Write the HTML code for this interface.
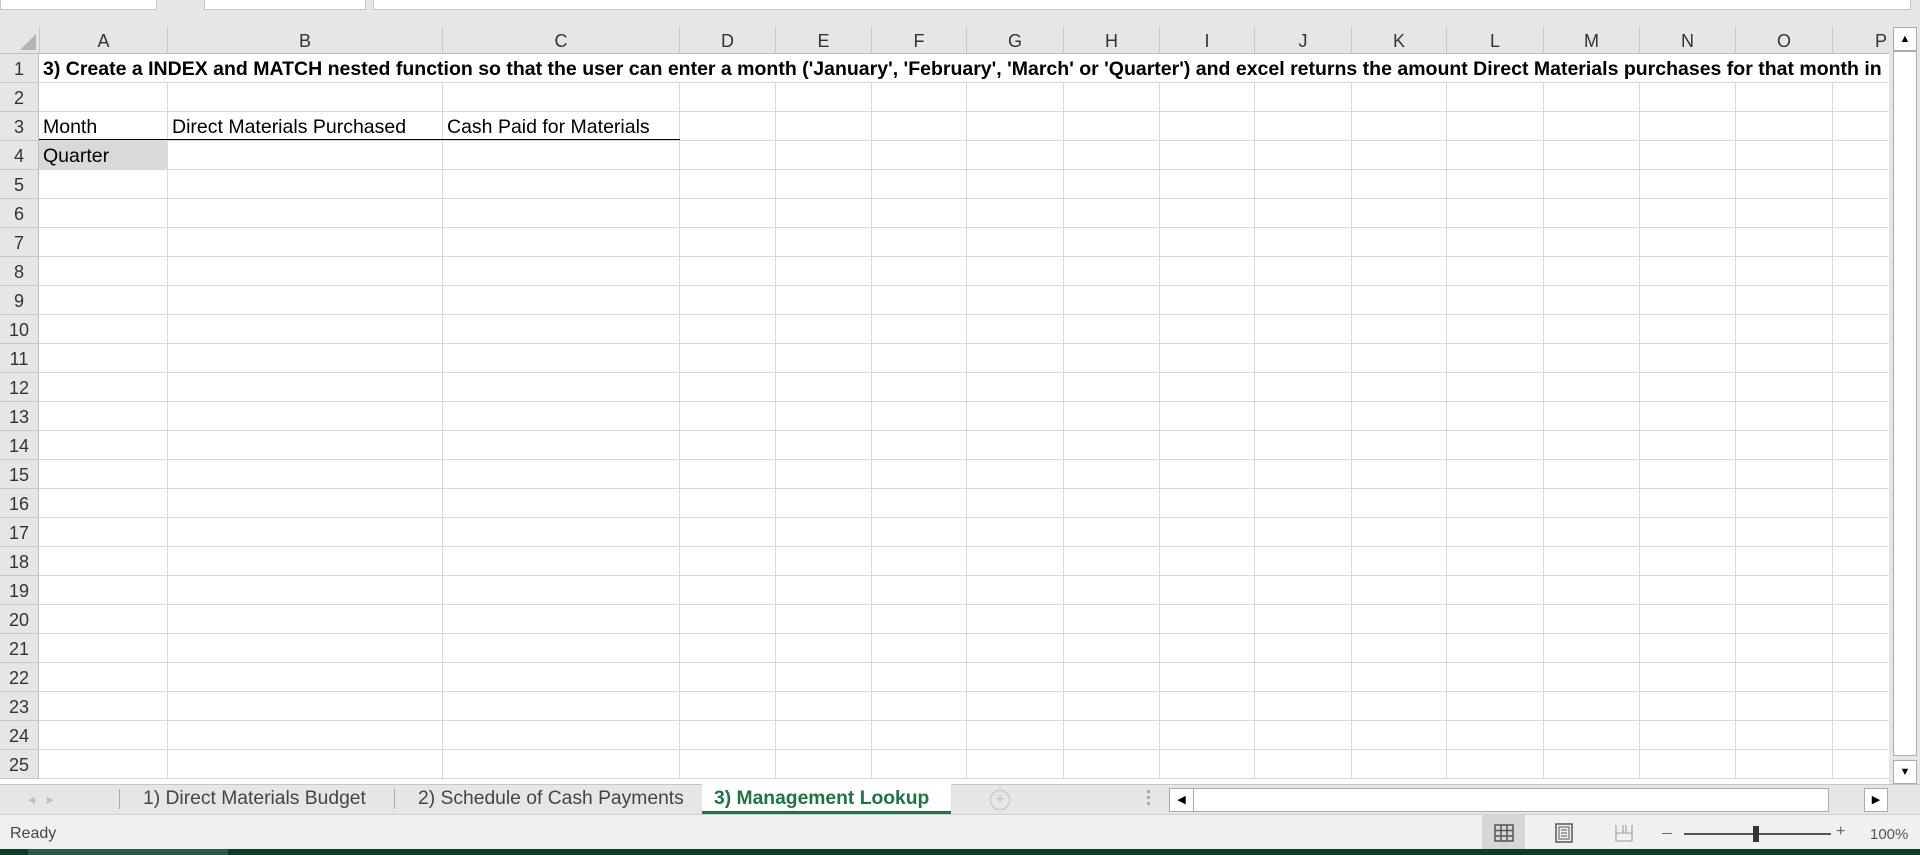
<!DOCTYPE html>
<html><head><meta charset="utf-8"><style>
*{margin:0;padding:0;box-sizing:border-box}
body{width:1920px;height:855px;overflow:hidden;background:#fff;font-family:"Liberation Sans",sans-serif;position:relative}
.a{position:absolute}
.top{left:0;top:0;width:1920px;height:27px;background:#e6e6e6}
.box{background:#fff;border:1px solid #c6c6c6;border-top:none;height:10px;top:0}
.colh{top:27px;height:27px;background:#e6e6e6;border-bottom:1px solid #bdbdbd}
.ch{top:27px;height:27px;font-size:18px;color:#333;text-align:center;line-height:28px;border-right:1px solid #c8c8c8}
.rh{left:0;width:39px;height:29px;font-size:18px;color:#333;text-align:center;line-height:30px;background:#e6e6e6;border-bottom:1px solid #c8c8c8;border-right:1px solid #bdbdbd}
.grid{left:39px;top:54px;width:1850px;height:725px;background:repeating-linear-gradient(to bottom,transparent 0,transparent 28px,#dadada 28px,#dadada 29px)}
.vl{top:54px;width:1px;height:730px;background:#dadada}
.t{font-size:19.5px;color:#000;white-space:nowrap;line-height:30px}
.tab{top:784px;height:30px;font-size:19.3px;color:#444;line-height:30px;white-space:nowrap}
</style></head><body>
<div class="a top"></div>
<div class="a box" style="left:0;width:157px"></div>
<div class="a box" style="left:204px;width:162px"></div>
<div class="a box" style="left:373px;width:1538px"></div>
<div class="a colh" style="left:0;width:1889px"></div>
<svg class="a" style="left:20px;top:34px" width="16" height="16"><polygon points="16,0 16,16 0,16" fill="#b4b4b4"/></svg>
<div class="a ch" style="left:39px;width:129px;border-left:1px solid #c8c8c8">A</div>
<div class="a ch" style="left:168px;width:275px">B</div>
<div class="a ch" style="left:443px;width:237px">C</div>
<div class="a ch" style="left:680px;width:96px">D</div>
<div class="a ch" style="left:776px;width:96px">E</div>
<div class="a ch" style="left:872px;width:95px">F</div>
<div class="a ch" style="left:967px;width:97px">G</div>
<div class="a ch" style="left:1064px;width:96px">H</div>
<div class="a ch" style="left:1160px;width:95px">I</div>
<div class="a ch" style="left:1255px;width:97px">J</div>
<div class="a ch" style="left:1352px;width:95px">K</div>
<div class="a ch" style="left:1447px;width:97px">L</div>
<div class="a ch" style="left:1544px;width:96px">M</div>
<div class="a ch" style="left:1640px;width:96px">N</div>
<div class="a ch" style="left:1736px;width:97px">O</div>
<div class="a ch" style="left:1833px;width:56px;text-align:right;padding-right:2px;border-right:none">P</div>
<div class="a grid"></div>
<div class="a" style="left:39px;top:141px;width:129px;height:28px;background:#d9d9d9"></div>
<div class="a vl" style="left:167px"></div><div class="a vl" style="left:442px"></div><div class="a vl" style="left:679px"></div><div class="a vl" style="left:775px"></div><div class="a vl" style="left:871px"></div><div class="a vl" style="left:966px"></div><div class="a vl" style="left:1063px"></div><div class="a vl" style="left:1159px"></div><div class="a vl" style="left:1254px"></div><div class="a vl" style="left:1351px"></div><div class="a vl" style="left:1446px"></div><div class="a vl" style="left:1543px"></div><div class="a vl" style="left:1639px"></div><div class="a vl" style="left:1735px"></div><div class="a vl" style="left:1832px"></div>
<div class="a" style="left:39px;top:54px;width:1850px;height:29px;background:#fff;border-bottom:1px solid #dadada"></div>
<div class="a" style="left:39px;top:139px;width:641px;height:1px;background:#000"></div>
<div class="a" style="left:0;top:54px">
<div class="rh">1</div><div class="rh">2</div><div class="rh">3</div><div class="rh">4</div><div class="rh">5</div><div class="rh">6</div><div class="rh">7</div><div class="rh">8</div><div class="rh">9</div><div class="rh">10</div><div class="rh">11</div><div class="rh">12</div><div class="rh">13</div><div class="rh">14</div><div class="rh">15</div><div class="rh">16</div><div class="rh">17</div><div class="rh">18</div><div class="rh">19</div><div class="rh">20</div><div class="rh">21</div><div class="rh">22</div><div class="rh">23</div><div class="rh">24</div><div class="rh">25</div>
</div>
<div class="a t" style="left:43px;top:54px;width:1844px;overflow:hidden;font-weight:bold;font-size:19.5px">3) Create a INDEX and MATCH nested function so that the user can enter a month ('January', 'February', 'March' or 'Quarter') and excel returns the amount Direct Materials purchases for that month in</div>
<div class="a t" style="left:43px;top:112px">Month</div>
<div class="a t" style="left:172px;top:112px">Direct Materials Purchased</div>
<div class="a t" style="left:447px;top:112px">Cash Paid for Materials</div>
<div class="a t" style="left:43px;top:141px">Quarter</div>
<!-- vertical scrollbar -->
<div class="a" style="left:1889px;top:27px;width:31px;height:757px;background:#e6e6e6"></div>
<div class="a" style="left:1893px;top:27px;width:24px;height:24px;background:#fff;border:1px solid #ababab;font-size:11px;text-align:center;line-height:22px">▲</div>
<div class="a" style="left:1893px;top:51px;width:24px;height:705px;background:#fff;border:1px solid #ababab"></div>
<div class="a" style="left:1893px;top:760px;width:24px;height:24px;background:#fff;border:1px solid #ababab;font-size:11px;text-align:center;line-height:22px">▼</div>
<!-- tab bar -->
<div class="a" style="left:0;top:779px;width:1889px;height:5px;background:#fff"></div>
<div class="a" style="left:0;top:784px;width:1920px;height:30px;background:#e6e6e6;border-top:1px solid #c6c6c6"></div>
<div class="a" style="left:28px;top:784px;font-size:14px;color:#c0c0c0;line-height:30px">◂&nbsp;&nbsp;&nbsp;▸</div>
<div class="a" style="left:119px;top:789px;width:1px;height:20px;background:#aaa"></div>
<div class="a tab" style="left:143px">1) Direct Materials Budget</div>
<div class="a" style="left:394px;top:789px;width:1px;height:20px;background:#aaa"></div>
<div class="a tab" style="left:418px">2) Schedule of Cash Payments</div>
<div class="a" style="left:702px;top:784px;width:249px;height:30px;background:#fff;border-bottom:3px solid #217346"></div>
<div class="a tab" style="left:714px;color:#217346;font-weight:bold;line-height:29px">3) Management Lookup</div>
<div class="a" style="left:990px;top:790px;width:20px;height:20px;border:1px solid #c0c0c0;border-radius:50%;color:#c0c0c0;font-size:16px;text-align:center;line-height:18px">+</div>
<div class="a" style="left:1147px;top:790px;width:3px;height:18px;background:repeating-linear-gradient(to bottom,#aaa 0,#aaa 3px,transparent 3px,transparent 6px)"></div>
<div class="a" style="left:1169px;top:788px;width:25px;height:24px;background:#fff;border:1px solid #ababab;font-size:11px;text-align:center;line-height:22px">◀</div>
<div class="a" style="left:1193px;top:788px;width:636px;height:24px;background:#fff;border:1px solid #ababab"></div>
<div class="a" style="left:1864px;top:788px;width:24px;height:24px;background:#fff;border:1px solid #ababab;font-size:11px;text-align:center;line-height:22px">▶</div>
<!-- status bar -->
<div class="a" style="left:0;top:814px;width:1920px;height:35px;background:#f0f0f0;border-top:1px solid #d0d0d0"></div>
<div class="a" style="left:10px;top:825px;font-size:16px;color:#444">Ready</div>
<div class="a" style="left:1482px;top:815px;width:43px;height:34px;background:#d6d6d6"></div>
<svg class="a" style="left:1494px;top:824px" width="20" height="18"><rect x="1" y="1" width="18" height="16" fill="none" stroke="#555" stroke-width="1.5"/><path d="M7 1V17M13 1V17M1 6.5H19M1 12H19" stroke="#555" stroke-width="1.5"/></svg>
<svg class="a" style="left:1554px;top:823px" width="20" height="20"><rect x="2" y="1" width="16" height="18" fill="none" stroke="#555" stroke-width="1.5"/><rect x="5" y="4" width="10" height="12" fill="none" stroke="#555"/><path d="M7 7H13M7 10H13M7 13H13" stroke="#555"/></svg>
<svg class="a" style="left:1614px;top:823px" width="20" height="20"><path d="M2 2V18H18V2M2 10H18M9 2V10M12 2V10" fill="none" stroke="#aaa" stroke-width="1.3"/></svg>
<div class="a" style="left:1662px;top:833px;width:10px;height:1px;background:#666"></div>
<div class="a" style="left:1684px;top:833px;width:147px;height:2px;background:#555"></div>
<div class="a" style="left:1753px;top:826px;width:6px;height:16px;background:#333"></div>
<div class="a" style="left:1836px;top:823px;font-size:16px;color:#666">+</div>
<div class="a" style="left:1870px;top:826px;font-size:15px;color:#555">100%</div>
<div class="a" style="left:0;top:849px;width:1920px;height:6px;background:#0e3d2a"></div>
<div class="a" style="left:28px;top:849px;width:200px;height:6px;background:#2f5a4a"></div>
</body></html>
